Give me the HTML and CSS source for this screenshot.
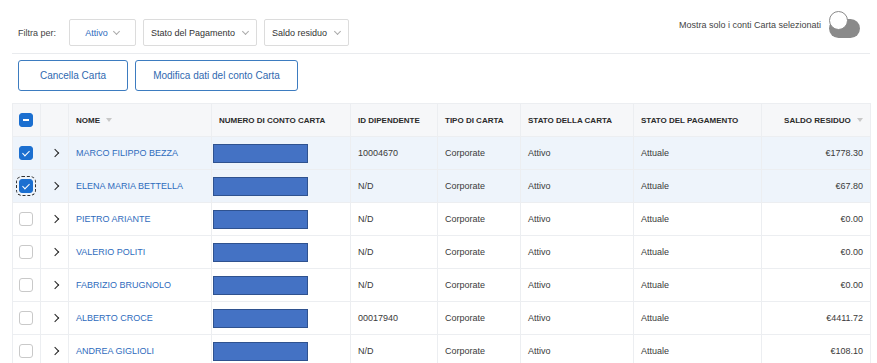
FILE: index.html
```html
<!DOCTYPE html>
<html lang="it">
<head>
    <meta charset="UTF-8">
    <title>Conti Carta</title>
    <link rel="stylesheet" href="styles.css">
</head>
<body>
    <div class="page">
        <div class="toolbar">
            <div class="filters">
                <span class="filter-label">Filtra per:</span>
                <button class="dropdown active" type="button">Attivo <span class="caret"></span></button>
                <button class="dropdown" type="button">Stato del Pagamento <span class="caret"></span></button>
                <button class="dropdown" type="button">Saldo residuo <span class="caret"></span></button>
            </div>
            <label class="switch-wrap">
                <span>Mostra solo i conti Carta selezionati</span>
                <span class="switch"><span class="knob"></span></span>
            </label>
        </div>

        <div class="actions">
            <button class="btn btn-cancel" type="button">Cancella Carta</button>
            <button class="btn btn-edit" type="button">Modifica dati del conto Carta</button>
        </div>

        <table class="grid">
            <colgroup>
                <col class="c-check">
                <col class="c-exp">
                <col class="c-name">
                <col class="c-num">
                <col class="c-id">
                <col class="c-type">
                <col class="c-state">
                <col class="c-pay">
                <col class="c-bal">
            </colgroup>
            <thead>
                <tr>
                    <th><span class="cb partial"></span></th>
                    <th></th>
                    <th>NOME <span class="sort"></span></th>
                    <th>NUMERO DI CONTO CARTA</th>
                    <th>ID DIPENDENTE</th>
                    <th>TIPO DI CARTA</th>
                    <th>STATO DELLA CARTA</th>
                    <th>STATO DEL PAGAMENTO</th>
                    <th class="num">SALDO RESIDUO <span class="sort"></span></th>
                </tr>
            </thead>
            <tbody>
                <tr class="selected">
                    <td><span class="cb checked"></span></td>
                    <td><span class="chev"></span></td>
                    <td class="name">MARCO FILIPPO BEZZA</td>
                    <td><span class="mask"></span></td>
                    <td>10004670</td>
                    <td>Corporate</td>
                    <td>Attivo</td>
                    <td>Attuale</td>
                    <td class="num">€1778.30</td>
                </tr>
                <tr class="selected">
                    <td><span class="cb checked focus"></span></td>
                    <td><span class="chev"></span></td>
                    <td class="name">ELENA MARIA BETTELLA</td>
                    <td><span class="mask"></span></td>
                    <td>N/D</td>
                    <td>Corporate</td>
                    <td>Attivo</td>
                    <td>Attuale</td>
                    <td class="num">€67.80</td>
                </tr>
                <tr>
                    <td><span class="cb"></span></td>
                    <td><span class="chev"></span></td>
                    <td class="name">PIETRO ARIANTE</td>
                    <td><span class="mask"></span></td>
                    <td>N/D</td>
                    <td>Corporate</td>
                    <td>Attivo</td>
                    <td>Attuale</td>
                    <td class="num">€0.00</td>
                </tr>
                <tr>
                    <td><span class="cb"></span></td>
                    <td><span class="chev"></span></td>
                    <td class="name">VALERIO POLITI</td>
                    <td><span class="mask"></span></td>
                    <td>N/D</td>
                    <td>Corporate</td>
                    <td>Attivo</td>
                    <td>Attuale</td>
                    <td class="num">€0.00</td>
                </tr>
                <tr>
                    <td><span class="cb"></span></td>
                    <td><span class="chev"></span></td>
                    <td class="name">FABRIZIO BRUGNOLO</td>
                    <td><span class="mask"></span></td>
                    <td>N/D</td>
                    <td>Corporate</td>
                    <td>Attivo</td>
                    <td>Attuale</td>
                    <td class="num">€0.00</td>
                </tr>
                <tr>
                    <td><span class="cb"></span></td>
                    <td><span class="chev"></span></td>
                    <td class="name">ALBERTO CROCE</td>
                    <td><span class="mask"></span></td>
                    <td>00017940</td>
                    <td>Corporate</td>
                    <td>Attivo</td>
                    <td>Attuale</td>
                    <td class="num">€4411.72</td>
                </tr>
                <tr>
                    <td><span class="cb"></span></td>
                    <td><span class="chev"></span></td>
                    <td class="name">ANDREA GIGLIOLI</td>
                    <td><span class="mask"></span></td>
                    <td>N/D</td>
                    <td>Corporate</td>
                    <td>Attivo</td>
                    <td>Attuale</td>
                    <td class="num">€108.10</td>
                </tr>
            </tbody>
        </table>
    </div>
</body>
</html>
```

FILE: styles.css
```css
* {
    box-sizing: border-box;
    margin: 0;
    padding: 0;
}

body {
    font-family: "Liberation Sans", Arial, sans-serif;
    font-size: 9px;
    color: #333;
    background: #fff;
}

.page {
    padding: 0 7px 0 12px;
}

/* barra filtri */
.toolbar {
    display: flex;
    justify-content: space-between;
    align-items: flex-start;
    padding: 19px 10px 7px 6px;
    border-bottom: 1px solid #e9ebee;
}

.filters {
    display: flex;
    align-items: center;
    gap: 7px;
}

.filter-label {
    margin-right: 6px;
    color: #444;
}

.dropdown {
    height: 27px;
    padding: 0 8px 0 7px;
    background: #fff;
    border: 1px solid #dcdcdc;
    border-radius: 2px;
    font-family: inherit;
    font-size: 9px;
    color: #333;
    display: flex;
    align-items: center;
    gap: 8px;
}

.dropdown.active {
    width: 67px;
    justify-content: center;
    gap: 6px;
    color: #2f6cbd;
}

.caret {
    width: 5px;
    height: 5px;
    border-right: 1px solid #aaa;
    border-bottom: 1px solid #aaa;
    transform: rotate(45deg);
    margin-top: -3px;
}

.switch-wrap {
    display: flex;
    align-items: center;
    gap: 8px;
    color: #444;
}

.switch-wrap span:first-child {
    margin-top: -8px;
}

.switch {
    width: 31px;
    height: 19px;
    border-radius: 10px;
    background: #8a8a8a;
    position: relative;
}

.switch .knob {
    position: absolute;
    left: 0;
    top: 0;
    width: 19px;
    height: 19px;
    border-radius: 50%;
    background: #fff;
    border: 1px solid #8a8a8a;
}

/* bottoni azioni */
.actions {
    display: flex;
    gap: 7px;
    padding: 6px 0 0 6px;
}

.btn {
    height: 31px;
    background: #fff;
    border: 1px solid #3d7cc0;
    border-radius: 3px;
    font-family: inherit;
    font-size: 10px;
    color: #2f69b0;
}

.btn-cancel {
    width: 110px;
}

.btn-edit {
    width: 163px;
}

/* tabella */
.grid {
    margin-top: 12px;
    width: 858px;
    border-collapse: collapse;
    table-layout: fixed;
}

.c-check { width: 28px; }
.c-exp { width: 28px; }
.c-name { width: 143px; }
.c-num { width: 139px; }
.c-id { width: 87px; }
.c-type { width: 83px; }
.c-state { width: 113px; }
.c-pay { width: 128px; }
.c-bal { width: 109px; }

.grid th,
.grid td {
    height: 33px;
    padding: 0 7px;
    border: 1px solid #eceef1;
    text-align: left;
    vertical-align: middle;
    white-space: nowrap;
}

.grid th {
    background: #f6f7f9;
    font-size: 8px;
    font-weight: bold;
    color: #2a2a2a;
}

.grid td {
    font-size: 9px;
    color: #3a3a3a;
}

.grid tr.selected td {
    background: #eef4fb;
}

.grid .num {
    text-align: right;
}

.grid td.name {
    color: #2f6cbd;
}

.grid td:first-child,
.grid th:first-child {
    padding: 0 0 0 6px;
}

.grid td:nth-child(2) {
    padding: 0 0 0 11px;
}

.sort {
    display: inline-block;
    margin-left: 4px;
    border-left: 3px solid transparent;
    border-right: 3px solid transparent;
    border-top: 4px solid #c8c8c8;
    vertical-align: 1px;
}

/* checkbox */
.cb {
    display: block;
    width: 14px;
    height: 14px;
    border: 1px solid #c9c9c9;
    border-radius: 3px;
    background: #fff;
    position: relative;
}

.cb.checked,
.cb.partial {
    background: #1b6fd0;
    border-color: #1b6fd0;
}

.cb.checked::after {
    content: "";
    position: absolute;
    left: 4px;
    top: 2px;
    width: 3px;
    height: 6px;
    border-right: 1.5px solid #fff;
    border-bottom: 1.5px solid #fff;
    transform: rotate(45deg);
}

.cb.partial::after {
    content: "";
    position: absolute;
    left: 3px;
    right: 3px;
    top: 5px;
    height: 2px;
    background: #fff;
}

.cb.focus {
    outline: 1px dashed #333;
    outline-offset: 2px;
}

.chev {
    display: block;
    width: 6px;
    height: 6px;
    border-right: 1.6px solid #222;
    border-top: 1.6px solid #222;
    transform: rotate(45deg);
}

.mask {
    display: block;
    width: 95px;
    height: 19px;
    margin-left: -6px;
    background: #4472c4;
    border: 1px solid #2f528f;
}
```
